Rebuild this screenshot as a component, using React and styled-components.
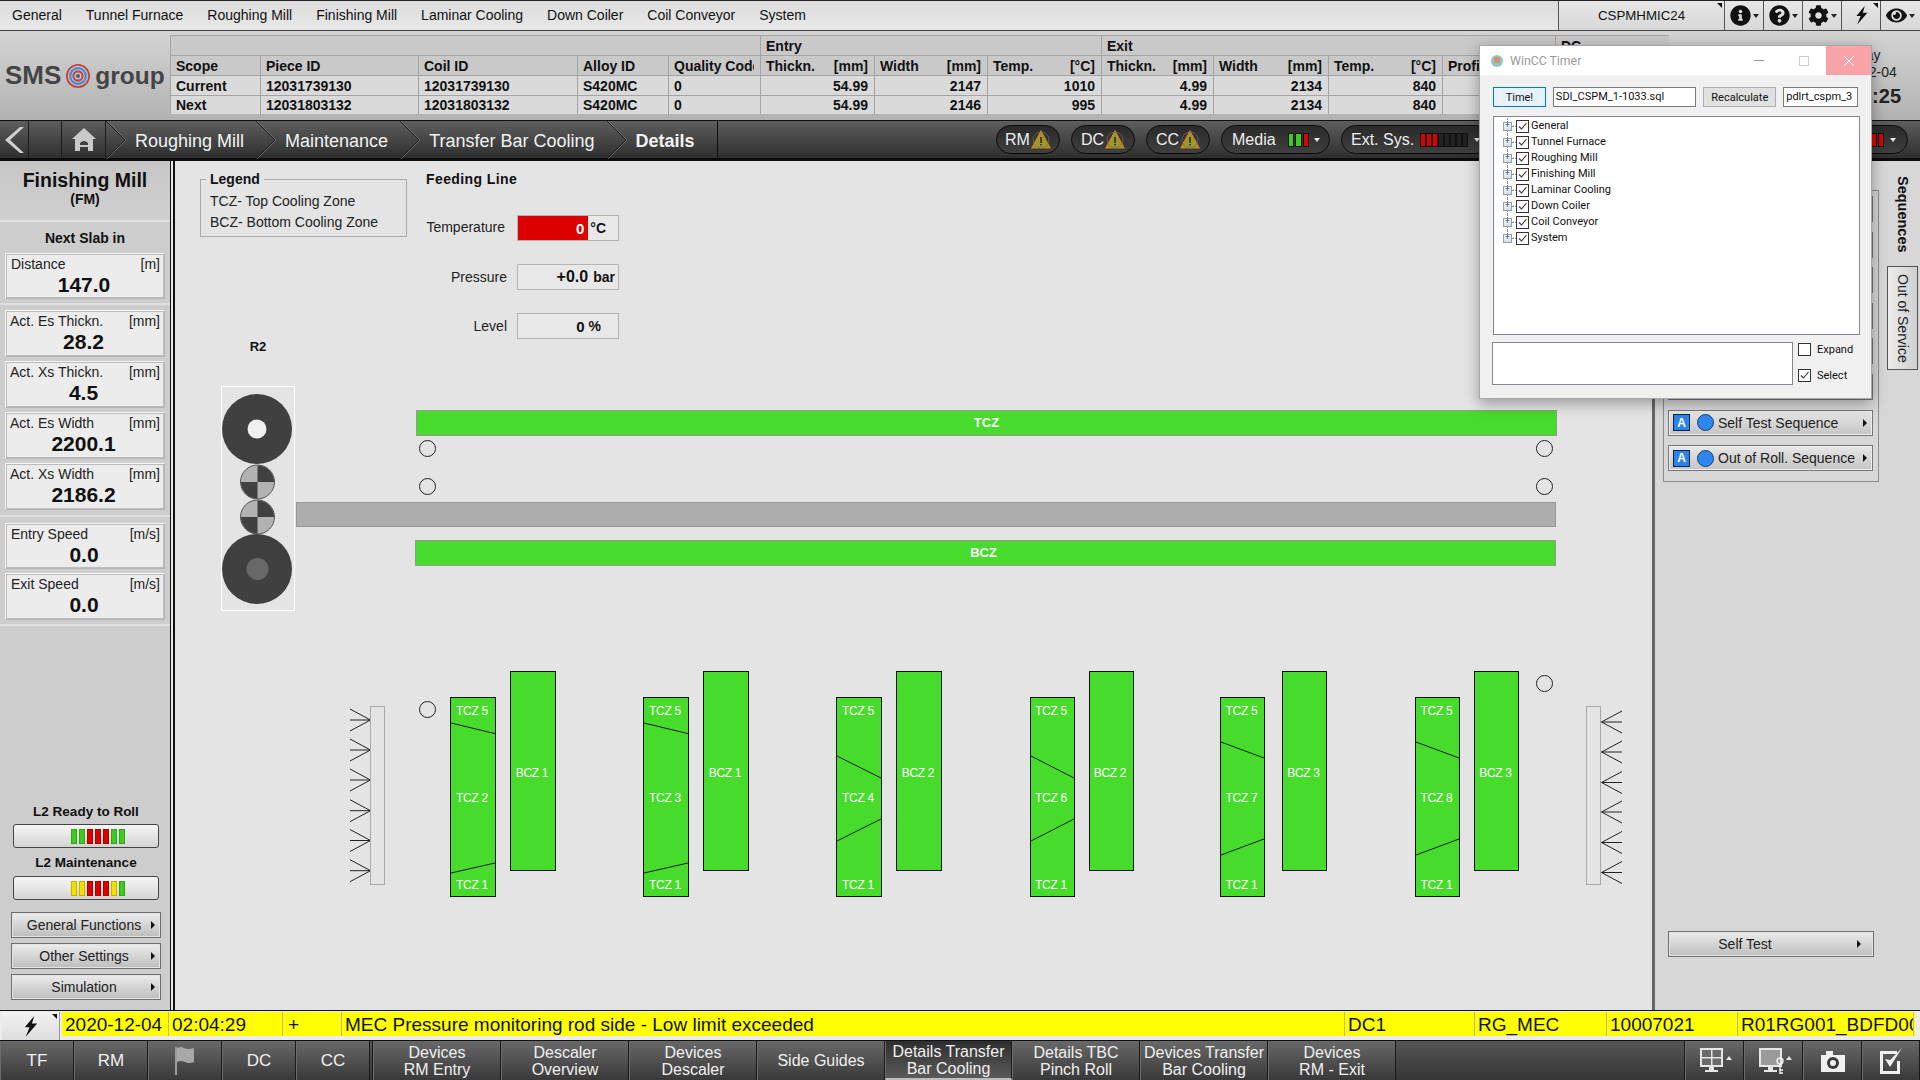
import styled, { createGlobalStyle } from "styled-components";
import { FaInfoCircle, FaQuestionCircle, FaCog, FaEye } from "react-icons/fa";

const GlobalStyle = createGlobalStyle`
  html, body {
    margin: 0;
    padding: 0;
    background: #e4e4e4;
  }
  * {
    box-sizing: border-box;
  }
`;

const Page = styled.div`
  position: relative;
  width: 1920px;
  height: 1080px;
  overflow: hidden;
  display: flex;
  flex-direction: column;
  font-family: "Liberation Sans", Arial, sans-serif;
  color: #111;
`;

/* top menu */
const TopMenu = styled.div`
  height: 31px;
  flex: none;
  display: flex;
  align-items: stretch;
  background: linear-gradient(#dcdcdc, #e8e8e8);
  border-top: 1px solid #222;
  border-bottom: 1px solid #444;
  font-size: 14px;
`;

const MenuItems = styled.div`
  flex: 1;
  display: flex;
  align-items: center;
  gap: 24px;
  padding: 0 0 2px 12px;
`;

const ComputerName = styled.div`
  position: relative;
  width: 167px;
  display: flex;
  align-items: center;
  justify-content: center;
  padding-bottom: 1px;
  font-size: 13.3px;
  border-left: 1px solid #555;
  border-right: 1px solid #555;
  background: linear-gradient(#e6e6e6, #d8d8d8);
`;

const Corner = styled.span`
  position: absolute;
  top: 2px;
  right: 2px;
  width: 0;
  height: 0;
  border-top: 5px solid #111;
  border-left: 5px solid transparent;
`;

const ToolButton = styled.div`
  position: relative;
  width: 39px;
  display: flex;
  align-items: center;
  justify-content: center;
  gap: 2px;
  border-right: 1px solid #555;
  background: linear-gradient(#e6e6e6, #d8d8d8);
  font-size: 21px;
  color: #111;
  &:last-child {
    border-right: none;
  }
`;

const Caret = styled.span`
  width: 0;
  height: 0;
  border-top: 4px solid #222;
  border-left: 3px solid transparent;
  border-right: 3px solid transparent;
`;

/* header with the table */
const Header = styled.div`
  height: 89px;
  flex: none;
  display: flex;
  background: linear-gradient(#d4d4d4, #b2b2b2);
`;

const Logo = styled.div`
  width: 170px;
  flex: none;
  display: flex;
  align-items: center;
  padding: 0 0 0 5px;
  gap: 5px;
  font-weight: 700;
  color: #454545;
`;

const LogoText = styled.span`
  font-size: ${(p) => p.$size}px;
`;

const DataTable = styled.div`
  margin-top: 4px;
  width: 1499px;
  height: 79px;
  flex: none;
  display: grid;
  grid-template-columns: 90px 158px 159px 91px 92px 114px 113px 114px 112px 115px 114px 113px 114px;
  grid-template-rows: 20px 20px 20px 19px;
  font-size: 14px;
  font-weight: 700;
`;

const Cell = styled.div`
  grid-column: span ${(p) => p.$span || 1};
  display: flex;
  align-items: center;
  justify-content: ${(p) => (p.$right ? "flex-end" : "space-between")};
  padding: 0 6px 0 5px;
  overflow: hidden;
  white-space: nowrap;
  background: ${(p) => (p.$head ? "#c9c9c9" : "#dadada")};
  border-top: 1px solid #a4a4a4;
  border-left: 1px solid #a4a4a4;
`;

const ClippedHead = styled.span`
  min-width: 0;
  overflow: hidden;
`;

const Unit = styled.span`
  margin-left: auto;
`;

const DateBlock = styled.div`
  margin-left: auto;
  width: 104px;
  padding: 16px 14px 0 0;
  display: flex;
  flex-direction: column;
  align-items: center;
  font-size: 14px;
  line-height: 17px;
  color: #222;
`;

const Clock = styled.div`
  font-size: 20px;
  line-height: 30px;
  font-weight: 700;
`;

/* breadcrumb bar */
const NavBar = styled.div`
  height: 41px;
  flex: none;
  display: flex;
  align-items: stretch;
  background: linear-gradient(#5e5e5e, #2e2e2e);
  border-top: 1px solid #111;
  border-bottom: 3px solid #0c0c0c;
  color: #f2f2f2;
  font-size: 18px;
`;

const NavCell = styled.div`
  width: ${(p) => p.$w}px;
  flex: none;
  display: flex;
  align-items: center;
  justify-content: center;
  border-right: 1px solid #1c1c1c;
`;

const Crumb = styled.div`
  display: flex;
  align-items: center;
  padding-top: 3px;
  font-weight: ${(p) => (p.$active ? 700 : 400)};
`;

const CrumbChevron = styled.svg`
  width: 20px;
  height: 38px;
  margin: ${(p) => p.$margin || "0 9px 0 12px"};
  flex: none;
`;

const CrumbEnd = styled.div`
  margin-left: 22px;
  width: 1px;
  background: #111;
`;

const Pills = styled.div`
  margin-left: auto;
  display: flex;
  align-items: center;
  gap: 11px;
  padding-right: 12px;
`;

const Pill = styled.div`
  width: ${(p) => p.$w}px;
  height: 29px;
  flex: none;
  display: flex;
  align-items: center;
  justify-content: ${(p) => p.$justify || "center"};
  gap: ${(p) => p.$gap || 0}px;
  padding: ${(p) => p.$padding || "0"};
  border: 1px solid #0b0b0b;
  border-radius: 15px;
  background: linear-gradient(#2a2a2a, #3f3f3f);
  font-size: 16px;
  color: #eeeeee;
`;

const SmallBars = styled.div`
  display: flex;
  gap: ${(p) => p.$gap}px;
  margin-left: ${(p) => p.$left || 0}px;
`;

const SmallBar = styled.span`
  width: ${(p) => p.$w}px;
  height: 14px;
  background: ${(p) => p.$color};
  border: 1px solid #111;
`;

const PillCaret = styled.span`
  width: 0;
  height: 0;
  border-top: 4px solid #e8e8e8;
  border-left: 3.5px solid transparent;
  border-right: 3.5px solid transparent;
`;

/* main area */
const Main = styled.div`
  flex: 1;
  min-height: 0;
  display: flex;
`;

const Sidebar = styled.div`
  width: 170px;
  flex: none;
  display: flex;
  flex-direction: column;
  background: #cdcdcd;
`;

const SideTitle = styled.div`
  height: 61px;
  flex: none;
  padding-top: 8px;
  text-align: center;
  font-weight: 700;
  font-size: 19.5px;
  line-height: 23px;
  border-bottom: 2px solid #e2e2e2;
  background: linear-gradient(#c6c6c6, #d0d0d0);
`;

const SideSub = styled.div`
  font-size: 14px;
  line-height: 15px;
`;

const SideSection = styled.div`
  display: flex;
  flex-direction: column;
  gap: ${(p) => p.$gap || 4}px;
  padding: ${(p) => p.$padding};
  border-bottom: 2px solid #dfdfdf;
`;

const SideHeading = styled.div`
  height: 31px;
  margin-bottom: -4px;
  display: flex;
  align-items: center;
  justify-content: center;
  font-size: 14px;
  font-weight: 700;
`;

const ValueBox = styled.div`
  height: ${(p) => p.$h || 47}px;
  flex: none;
  padding: 2px 4px 0 ${(p) => p.$inset || 5}px;
  background: #ececec;
  border: 1px solid #b4b4b4;
  border-top-color: #f6f6f6;
  border-left-color: #f6f6f6;
  box-shadow: 0 0 0 1px #bcbcbc inset;
`;

const ValueHead = styled.div`
  display: flex;
  justify-content: space-between;
  font-size: 14px;
  line-height: 16px;
  color: #222;
`;

const ValueNum = styled.div`
  margin-top: 1px;
  text-align: center;
  padding-right: 3px;
  font-size: 21px;
  line-height: 23px;
  font-weight: 700;
`;

const SideBottom = styled.div`
  margin-top: auto;
  padding: 0 9px 10px 11px;
  display: flex;
  flex-direction: column;
`;

const BarLabel = styled.div`
  height: ${(p) => p.$h}px;
  display: flex;
  align-items: center;
  justify-content: center;
  font-size: 13.5px;
  font-weight: 700;
`;

const StatusBar = styled.div`
  height: 24px;
  margin: 0 2px;
  display: flex;
  align-items: center;
  justify-content: flex-end;
  gap: 2px;
  padding-right: 33px;
  border: 1px solid #444;
  border-radius: 3px;
  background: linear-gradient(#f6f6f6, #d4d4d4);
`;

const StatusTick = styled.span`
  width: 6px;
  height: 15px;
  background: ${(p) => p.$color};
  border: 1px solid rgba(0, 0, 0, 0.2);
`;

const MenuButton = styled.div`
  position: relative;
  height: ${(p) => p.$h || 26}px;
  margin-top: ${(p) => p.$top || 0}px;
  display: flex;
  align-items: center;
  justify-content: center;
  padding-right: ${(p) => p.$pad || 0}px;
  font-size: 14px;
  border: 1px solid #6f6f6f;
  box-shadow: 0 0 0 1px #e4e4e4 inset;
  background: linear-gradient(#ececec, #bdbdbd);
  color: #222;
`;

const MenuArrow = styled.span`
  position: absolute;
  right: ${(p) => p.$right || 5}px;
  top: 50%;
  margin-top: -4px;
  width: 0;
  height: 0;
  border-left: 4px solid #111;
  border-top: 4px solid transparent;
  border-bottom: 4px solid transparent;
`;

const DoubleLine = styled.div`
  width: 5px;
  flex: none;
  background: #e8e8e8;
  border-left: 1px solid #111;
  border-right: 2px solid #111;
`;

/* canvas */
const Canvas = styled.div`
  position: relative;
  flex: 1;
  background: #e4e4e4;
  display: flex;
  align-items: flex-start;
  padding: 18px 0 0 25px;
`;

const LegendBox = styled.div`
  position: relative;
  width: 207px;
  height: 58px;
  flex: none;
  padding: 11px 0 0 9px;
  border: 1px solid #aaaaaa;
  font-size: 14px;
  line-height: 21px;
  color: #222;
`;

const LegendTitle = styled.span`
  position: absolute;
  top: -9px;
  left: 5px;
  padding: 0 4px;
  background: #e4e4e4;
  font-weight: 700;
  line-height: 17px;
  color: #111;
`;

const Feeding = styled.div`
  margin: -8px 0 0 19px;
  width: 195px;
`;

const FeedingTitle = styled.div`
  height: 16px;
  font-size: 14px;
  line-height: 16px;
  font-weight: 700;
  letter-spacing: 0.4px;
`;

const FeedingGrid = styled.div`
  margin-top: 28px;
  display: grid;
  grid-template-columns: 82px 102px;
  grid-auto-rows: 26px;
  column-gap: 10px;
  row-gap: 23px;
  margin-left: -1px;
  font-size: 14px;
  align-items: center;
`;

const FeedingLabel = styled.div`
  text-align: right;
  padding-right: ${(p) => p.$right || 0}px;
  padding-bottom: ${(p) => p.$bottom || 0}px;
  color: #222;
`;

const FeedingValue = styled.div`
  height: 26px;
  display: flex;
  align-items: center;
  justify-content: flex-end;
  padding-right: ${(p) => p.$pad || 4}px;
  gap: ${(p) => p.$gap || 4}px;
  background: #e8e8e8;
  border: 1px solid #b4b4b4;
  font-weight: 700;
`;

const RedValue = styled.div`
  width: 72px;
  height: 24px;
  margin: 0 auto 0 0;
  display: flex;
  align-items: center;
  justify-content: flex-end;
  padding-right: 4px;
  background: #dc0000;
  color: #ffffff;
  font-size: 15px;
`;

const Plain = styled.span`
  font-weight: ${(p) => p.$weight || 700};
  font-size: ${(p) => p.$size || 14}px;
`;

const RollLabel = styled.div`
  position: absolute;
  left: 58px;
  top: 178px;
  width: 50px;
  text-align: center;
  font-size: 13px;
  font-weight: 700;
`;

const RollStand = styled.svg`
  position: absolute;
  left: 46px;
  top: 225px;
  width: 74px;
  height: 225px;
`;

const Band = styled.div`
  position: absolute;
  left: ${(p) => p.$x}px;
  top: ${(p) => p.$y}px;
  width: ${(p) => p.$w}px;
  height: ${(p) => p.$h || 26}px;
  display: flex;
  align-items: center;
  justify-content: center;
  padding: 0 ${(p) => p.$labelShift || 0}px 2px 0;
  background: ${(p) => p.$bg || "#47db2b"};
  border: 1px solid #979797;
  color: #ffffff;
  font-size: 13px;
  font-weight: 700;
`;

const Sensor = styled.span`
  position: absolute;
  left: ${(p) => p.$x - 8}px;
  top: ${(p) => p.$y - 8.5}px;
  width: 17px;
  height: 17px;
  border: 1.5px solid #222;
  border-radius: 50%;
`;

const Rack = styled.div`
  position: absolute;
  left: ${(p) => p.$x}px;
  top: 545px;
  width: ${(p) => p.$w}px;
  height: 179px;
  border: 1px solid #a9a9a9;
`;

const ArrowSet = styled.svg`
  position: absolute;
  left: ${(p) => p.$x}px;
  top: 545px;
  width: 24px;
  height: 179px;
`;

const CoolingUnit = styled.div`
  position: absolute;
  left: ${(p) => p.$x}px;
  top: 510px;
  display: flex;
  align-items: flex-start;
  gap: ${(p) => p.$gap}px;
`;

const Zone = styled.div`
  position: relative;
  width: ${(p) => p.$w}px;
  height: 200px;
  margin-top: ${(p) => p.$top || 0}px;
  background: #47db2b;
  border: 1px solid #111;
`;

const ZoneLines = styled.svg`
  position: absolute;
  left: 0;
  top: 0;
  width: 100%;
  height: 100%;
`;

const ZoneLabel = styled.span`
  position: absolute;
  left: 0;
  right: 2px;
  top: ${(p) => p.$y - 8}px;
  line-height: 16px;
  text-align: center;
  color: #ffffff;
  font-size: 12px;
  letter-spacing: -0.3px;
`;

/* right column */
const RightPanel = styled.div`
  width: 268px;
  flex: none;
  display: flex;
  background: #d7d7d7;
  border-left: 3px solid #666;
`;

const RightColumn = styled.div`
  width: 225px;
  flex: none;
  padding: 29px 0 0 8px;
`;

const SeqGroup = styled.div`
  width: 216px;
  height: 292px;
  display: flex;
  flex-direction: column;
  gap: 9.6px;
  padding: 5px 5px 0 4px;
  border: 1px solid #8c8c8c;
`;

const SeqButton = styled.div`
  position: relative;
  height: 26px;
  flex: none;
  display: flex;
  align-items: center;
  padding-left: 4px;
  font-size: 14px;
  border: 1px solid #777;
  box-shadow: 0 0 0 1px #eeeeee inset;
  background: linear-gradient(#e8e8e8, #c4c4c4);
  color: #222;
`;

const AutoBadge = styled.span`
  width: 17px;
  height: 17px;
  flex: none;
  display: flex;
  align-items: center;
  justify-content: center;
  background: #2d83ee;
  border: 1px solid #0c2340;
  color: #ffffff;
  font-size: 12px;
  font-weight: 700;
`;

const StateDot = styled.span`
  width: 17px;
  height: 17px;
  flex: none;
  margin: 0 4px 0 7px;
  border-radius: 50%;
  background: #2f86f0;
  border: 1px solid #1f3f66;
`;

const SelfTest = styled(MenuButton)`
  width: 206px;
  margin: 449px 0 0 5px;
  padding-right: 52px;
`;

const SideTabs = styled.div`
  flex: 1;
  padding: 4px 0 0 7px;
  display: flex;
  flex-direction: column;
`;

const SeqTab = styled.div`
  writing-mode: vertical-rl;
  height: 101px;
  width: 31px;
  padding-top: 11px;
  display: flex;
  align-items: center;
  justify-content: flex-start;
  font-size: 14.5px;
  font-weight: 700;
`;

const ServiceTab = styled.div`
  writing-mode: vertical-rl;
  height: 104px;
  width: 31px;
  display: flex;
  align-items: center;
  justify-content: center;
  font-size: 14px;
  border: 1px solid #555;
  background: linear-gradient(to right, #ececec, #d0d0d0);
  color: #222;
`;

/* alarm line */
const AlarmBar = styled.div`
  height: 31px;
  flex: none;
  display: flex;
  align-items: flex-start;
  padding: 1px 5px 0 2px;
  border-top: 1px solid #111;
  border-bottom: 1px solid #111;
  background: #ececec;
`;

const AlarmButton = styled.div`
  position: relative;
  width: 58px;
  height: 28px;
  flex: none;
  margin-right: 2px;
  display: flex;
  align-items: center;
  justify-content: center;
  background: linear-gradient(#f2f2f2, #dddddd);
  border-right: 1px solid #999;
`;

const AlarmCells = styled.div`
  flex: 1;
  min-width: 0;
  height: 24px;
  display: flex;
  background: #ffff00;
  font-size: 19px;
  overflow: hidden;
  color: #111;
`;

const AlarmCell = styled.div`
  width: ${(p) => p.$w}px;
  flex: none;
  padding-left: ${(p) => p.$inset || 3}px;
  line-height: 26px;
  white-space: nowrap;
  overflow: hidden;
  border-right: 1px solid #b9b98a;
`;

/* bottom navigation */
const BottomNav = styled.div`
  height: 39px;
  flex: none;
  display: flex;
  background: linear-gradient(#626262, #363636);
  color: #f0f0f0;
`;

const NavTab = styled.div`
  width: ${(p) => p.$w}px;
  flex: none;
  display: flex;
  align-items: center;
  justify-content: center;
  text-align: center;
  font-size: ${(p) => p.$size || 16}px;
  line-height: 17px;
  border-right: 1px solid #1a1a1a;
  border-left: 1px solid #6c6c6c;
  background: ${(p) =>
    p.$active ? "linear-gradient(#2e2e2e, #5a5a5a)" : "linear-gradient(#686868, #393939)"};
  border-bottom: ${(p) => (p.$active ? "2px solid #bdbdbd" : "none")};
`;

const NavGap = styled.div`
  width: ${(p) => p.$w}px;
  flex: ${(p) => (p.$grow ? 1 : "none")};
  background: linear-gradient(#555, #363636);
  border-right: 1px solid #1a1a1a;
`;

/* WinCC Timer dialog */
const Dialog = styled.div`
  position: absolute;
  left: 1479px;
  top: 45px;
  width: 393px;
  height: 354px;
  background: #f0f0f0;
  border: 1px solid #a8a8a8;
  box-shadow: 0 4px 14px rgba(0, 0, 0, 0.35);
  font-family: Roboto, "Open Sans", sans-serif;
  font-size: 11px;
  color: #111;
`;

const TitleBar = styled.div`
  height: 29px;
  display: flex;
  align-items: center;
  background: #ffffff;
  padding-left: 10px;
  color: #9a9a9a;
  font-size: 12.3px;
  white-space: nowrap;
`;

const TitleText = styled.span`
  margin-left: 6px;
  margin-right: auto;
`;

const WindowButton = styled.div`
  width: 45px;
  height: 29px;
  flex: none;
  display: flex;
  align-items: center;
  justify-content: center;
  background: ${(p) => p.$bg || "transparent"};
`;

const DialogBody = styled.div`
  padding: 12px 13px 0 13px;
`;

const DialogRow = styled.div`
  display: flex;
  gap: 7px;
`;

const WinButton = styled.div`
  width: ${(p) => p.$w}px;
  height: 20px;
  display: flex;
  align-items: center;
  justify-content: center;
  border: 1px solid ${(p) => (p.$focus ? "#0078d7" : "#adadad")};
  background: ${(p) => (p.$focus ? "#e5f1fb" : "#e1e1e1")};
`;

const WinInput = styled.div`
  width: ${(p) => p.$w}px;
  height: 20px;
  padding-left: 2px;
  line-height: 17px;
  border: 1px solid #7a7a7a;
  background: #ffffff;
  white-space: nowrap;
`;

const Tree = styled.div`
  margin-top: 9px;
  width: 367px;
  height: 219px;
  padding: 1px 0 0 9px;
  border: 1px solid #828790;
  background: #ffffff;
`;

const TreeRow = styled.div`
  position: relative;
  height: 16px;
  display: flex;
  align-items: center;
  line-height: 16px;
`;

const TreeLine = styled.span`
  position: absolute;
  left: 4px;
  top: 0;
  bottom: ${(p) => (p.$last ? "8px" : 0)};
  border-left: 1px dotted #888;
`;

const Expander = styled.span`
  position: relative;
  z-index: 1;
  width: 9px;
  height: 9px;
  flex: none;
  display: flex;
  align-items: center;
  justify-content: center;
  border: 1px solid #8d9db5;
  background: linear-gradient(#ffffff, #dcdcdc);
  color: #1b2f70;
  font-size: 9px;
  line-height: 7px;
  font-family: "Liberation Mono", monospace;
`;

const TreeDash = styled.span`
  width: 4px;
  flex: none;
  border-top: 1px dotted #888;
`;

const CheckSquare = styled.span`
  width: 13px;
  height: 13px;
  flex: none;
  display: flex;
  align-items: center;
  justify-content: center;
  background: #ffffff;
  border: 1px solid #333;
  margin-right: 2px;
`;

const LowerRow = styled.div`
  margin-top: 7px;
  margin-left: -1px;
  display: flex;
  gap: 5px;
`;

const WinArea = styled.div`
  width: 301px;
  height: 43px;
  background: #ffffff;
  border: 1px solid #828790;
`;

const CheckColumn = styled.div`
  display: flex;
  flex-direction: column;
  gap: 13px;
  padding-top: 1px;
`;

const CheckRow = styled.div`
  height: 13px;
  display: flex;
  align-items: center;
  gap: 4px;
  line-height: 13px;
`;

const CheckMark = () => (
  <svg width="11" height="11" viewBox="0 0 11 11">
    <path d="M2 5.5 L4.5 8 L9.5 2" fill="none" stroke="#333" strokeWidth="1.1" />
  </svg>
);

const Bolt = ({ size = 22 }) => (
  <svg width={size} height={size * 1.2} viewBox="0 0 20 24">
    <path d="M14 1 L4 13 L9 13 L5 23 L17 9 L11.5 9 Z" fill="#111" />
  </svg>
);

const HomeIcon = () => (
  <svg width="26" height="25" viewBox="0 0 26 25">
    <path d="M13 1 L25 12 L22 12 L22 24 L17 24 L17 16 Q13 12 9 16 L9 24 L4 24 L4 12 L1 12 Z" fill="#c9c9c9" />
    <rect x="9" y="18" width="8" height="2" fill="#c9c9c9" />
  </svg>
);

const BackIcon = () => (
  <svg width="20" height="26" viewBox="0 0 20 26">
    <path d="M16 0 L20 0 L6 13 L20 26 L16 26 L1 13 Z" fill="#d0d0d0" />
  </svg>
);

const Chevron = ({ margin }) => (
  <CrumbChevron viewBox="0 0 20 38" $margin={margin}>
    <polyline points="0,0 19,19 0,38" fill="none" stroke="#1c1c1c" strokeWidth="1" />
    <polyline points="1,0 20,19 1,38" fill="none" stroke="#808080" strokeWidth="0.7" />
  </CrumbChevron>
);

const WarnIcon = () => (
  <svg width="20" height="19" viewBox="0 0 20 19">
    <path d="M10 1 L19 18 L1 18 Z" fill="#9a9a2c" stroke="#d9821a" strokeWidth="1.2" />
    <circle cx="10" cy="10" r="8" fill="none" stroke="#6c6c6c" strokeWidth="0.7" />
    <rect x="9.3" y="7" width="1.4" height="6" fill="#222" />
    <rect x="9.3" y="14" width="1.4" height="1.5" fill="#222" />
  </svg>
);

const LogoMark = () => (
  <svg width="24" height="24" viewBox="0 0 26 26">
    <ellipse cx="13" cy="13" rx="12" ry="12" fill="none" stroke="#c94040" strokeWidth="2" />
    <ellipse cx="13" cy="13" rx="8.5" ry="8.5" fill="none" stroke="#3f8fd2" strokeWidth="2.4" />
    <ellipse cx="13" cy="13" rx="5" ry="5" fill="none" stroke="#c94040" strokeWidth="2.2" />
    <circle cx="13" cy="13" r="2.2" fill="#3f5f86" />
  </svg>
);

const RollQuarters = ({ cy }) => (
  <g>
    <circle cx="36.5" cy={cy} r="17" fill="#b2b2b2" stroke="#555" strokeWidth="1" />
    <path d={`M36.5 ${cy} L36.5 ${cy - 16.5} A16.5 16.5 0 0 1 53 ${cy} Z`} fill="#404040" />
    <path d={`M36.5 ${cy} L36.5 ${cy + 16.5} A16.5 16.5 0 0 1 20 ${cy} Z`} fill="#404040" />
  </g>
);

const LEFT_ARROWS = [14, 44, 74, 104.7, 134.5, 164.7];
const RIGHT_ARROWS = [16, 46, 76.5, 106, 136.5, 166.5];

const UNITS = [
  { x: 275, w: 46, gap: 14, top: [25, 35.6], bottom: [175, 165], mid: "TCZ 2", bcz: "BCZ 1" },
  { x: 468, w: 46, gap: 14, top: [25, 35.6], bottom: [175, 165], mid: "TCZ 3", bcz: "BCZ 1" },
  { x: 661, w: 46, gap: 14, top: [58, 80], bottom: [143, 121], mid: "TCZ 4", bcz: "BCZ 2" },
  { x: 854.5, w: 45, gap: 14, top: [58, 80], bottom: [143, 121], mid: "TCZ 6", bcz: "BCZ 2" },
  { x: 1045, w: 45, gap: 17, top: [44, 60], bottom: [157, 141], mid: "TCZ 7", bcz: "BCZ 3" },
  { x: 1240, w: 45, gap: 14, top: [44, 60], bottom: [157, 141], mid: "TCZ 8", bcz: "BCZ 3" },
];

const MENU = ["General", "Tunnel Furnace", "Roughing Mill", "Finishing Mill", "Laminar Cooling", "Down Coiler", "Coil Conveyor", "System"];
const TREE = MENU;
const READY = ["#3fcc22", "#3fcc22", "#dd0000", "#dd0000", "#dd0000", "#3fcc22", "#3fcc22"];
const MAINT = ["#f2e000", "#f2e000", "#dd0000", "#dd0000", "#dd0000", "#f2e000", "#3fcc22"];

function CoolingZones({ unit }) {
  const w = unit.w - 2;
  return (
    <CoolingUnit $x={unit.x} $gap={unit.gap}>
      <Zone $w={unit.w} $top={26}>
        <ZoneLines viewBox={`0 0 ${w} 198`}>
          <line x1="0" y1={unit.top[0]} x2={w} y2={unit.top[1]} stroke="#1c1c1c" strokeWidth="1" />
          <line x1="0" y1={unit.bottom[0]} x2={w} y2={unit.bottom[1]} stroke="#1c1c1c" strokeWidth="1" />
        </ZoneLines>
        <ZoneLabel $y={13}>TCZ 5</ZoneLabel>
        <ZoneLabel $y={100}>{unit.mid}</ZoneLabel>
        <ZoneLabel $y={187}>TCZ 1</ZoneLabel>
      </Zone>
      <Zone $w={unit.w}>
        <ZoneLabel $y={101}>{unit.bcz}</ZoneLabel>
      </Zone>
    </CoolingUnit>
  );
}

function SideValue({ label, unit, value, h, inset }) {
  return (
    <ValueBox $h={h} $inset={inset}>
      <ValueHead>
        <span>{label}</span>
        <span>{unit}</span>
      </ValueHead>
      <ValueNum>{value}</ValueNum>
    </ValueBox>
  );
}

function TableRow({ name, piece, coil, values }) {
  return (
    <>
      <Cell>{name}</Cell>
      <Cell>{piece}</Cell>
      <Cell>{coil}</Cell>
      <Cell>S420MC</Cell>
      <Cell>0</Cell>
      {values.map((v, i) => (
        <Cell key={i} $right>{v}</Cell>
      ))}
      <Cell />
      <Cell />
    </>
  );
}

export default function App() {
  return (
    <Page>
      <GlobalStyle />

      <TopMenu>
        <MenuItems>
          {MENU.map((m) => (
            <span key={m}>{m}</span>
          ))}
        </MenuItems>
        <ComputerName>
          CSPMHMIC24
          <Corner />
        </ComputerName>
        <ToolButton>
          <FaInfoCircle />
          <Caret />
        </ToolButton>
        <ToolButton>
          <FaQuestionCircle />
          <Caret />
        </ToolButton>
        <ToolButton>
          <FaCog />
          <Caret />
        </ToolButton>
        <ToolButton>
          <Bolt size={17} />
          <Corner />
        </ToolButton>
        <ToolButton>
          <FaEye />
          <Caret />
        </ToolButton>
      </TopMenu>

      <Header>
        <Logo>
          <LogoText $size={26}>SMS</LogoText>
          <LogoMark />
          <LogoText $size={24.5}>group</LogoText>
        </Logo>
        <DataTable>
          <Cell $span={5} $head />
          <Cell $span={3} $head>Entry</Cell>
          <Cell $span={4} $head>Exit</Cell>
          <Cell $head>DC</Cell>

          <Cell $head>Scope</Cell>
          <Cell $head>Piece ID</Cell>
          <Cell $head>Coil ID</Cell>
          <Cell $head>Alloy ID</Cell>
          <Cell $head><ClippedHead>Quality Code</ClippedHead></Cell>
          <Cell $head>Thickn.<Unit>[mm]</Unit></Cell>
          <Cell $head>Width<Unit>[mm]</Unit></Cell>
          <Cell $head>Temp.<Unit>[°C]</Unit></Cell>
          <Cell $head>Thickn.<Unit>[mm]</Unit></Cell>
          <Cell $head>Width<Unit>[mm]</Unit></Cell>
          <Cell $head>Temp.<Unit>[°C]</Unit></Cell>
          <Cell $head>Profile</Cell>
          <Cell $head />

          <TableRow name="Current" piece="12031739130" coil="12031739130" values={["54.99", "2147", "1010", "4.99", "2134", "840"]} />
          <TableRow name="Next" piece="12031803132" coil="12031803132" values={["54.99", "2146", "995", "4.99", "2134", "840"]} />
        </DataTable>
        <DateBlock>
          <span>Friday</span>
          <span>2020-12-04</span>
          <Clock>02:04:25</Clock>
        </DateBlock>
      </Header>

      <NavBar>
        <NavCell $w={29}>
          <BackIcon />
        </NavCell>
        <NavCell $w={33} />
        <NavCell $w={44}>
          <HomeIcon />
        </NavCell>
        <Chevron margin="0 9px 0 0" />
        <Crumb>Roughing Mill</Crumb>
        <Chevron />
        <Crumb>Maintenance</Crumb>
        <Chevron />
        <Crumb>Transfer Bar Cooling</Crumb>
        <Chevron />
        <Crumb $active>Details</Crumb>
        <CrumbEnd />
        <Pills>
          <Pill $w={64} $gap={1}>RM<WarnIcon /></Pill>
          <Pill $w={64} $gap={1}>DC<WarnIcon /></Pill>
          <Pill $w={64} $gap={1}>CC<WarnIcon /></Pill>
          <Pill $w={109} $gap={5} $justify="flex-start" $padding="0 0 0 10px">
            Media
            <SmallBars $gap={1} $left={7}>
              <SmallBar $w={6.5} $color="#3fcc22" />
              <SmallBar $w={6.5} $color="#3fcc22" />
              <SmallBar $w={6.5} $color="#dd0000" />
            </SmallBars>
            <PillCaret />
          </Pill>
          <Pill $w={150} $gap={6} $justify="flex-start" $padding="0 0 0 9px">
            Ext. Sys.
            <SmallBars $gap={0.5}>
              {[0, 1, 2, 3, 4, 5, 6, 7].map((i) => (
                <SmallBar key={i} $w={5.5} $color={i < 3 ? "#dd0000" : "#222"} />
              ))}
            </SmallBars>
            <PillCaret />
          </Pill>
          <Pill $w={406} $justify="flex-end" $gap={6} $padding="0 11px 0 0">
            <SmallBars $gap={0.5}>
              <SmallBar $w={6.5} $color="#dd0000" />
              <SmallBar $w={6.5} $color="#dd0000" />
            </SmallBars>
            <PillCaret />
          </Pill>
        </Pills>
      </NavBar>

      <Main>
        <Sidebar>
          <SideTitle>
            Finishing Mill
            <SideSub>(FM)</SideSub>
          </SideTitle>
          <SideSection $padding="0 5px 4px 5px">
            <SideHeading>Next Slab in</SideHeading>
            <SideValue label="Distance" unit="[m]" value="147.0" h={46} />
          </SideSection>
          <SideSection $padding="5px 5px 5px 5px" $gap={4}>
            <SideValue label="Act. Es Thickn." unit="[mm]" value="28.2" inset={4} />
            <SideValue label="Act. Xs Thickn." unit="[mm]" value="4.5" inset={4} />
            <SideValue label="Act. Es Width" unit="[mm]" value="2200.1" inset={4} />
            <SideValue label="Act. Xs Width" unit="[mm]" value="2186.2" inset={4} />
          </SideSection>
          <SideSection $padding="6px 5px 4px 5px" $gap={4}>
            <SideValue label="Entry Speed" unit="[m/s]" value="0.0" h={46} />
            <SideValue label="Exit Speed" unit="[m/s]" value="0.0" h={47} />
          </SideSection>
          <SideBottom>
            <BarLabel $h={26}>L2 Ready to Roll</BarLabel>
            <StatusBar>
              {READY.map((c, i) => (
                <StatusTick key={i} $color={c} />
              ))}
            </StatusBar>
            <BarLabel $h={28}>L2 Maintenance</BarLabel>
            <StatusBar>
              {MAINT.map((c, i) => (
                <StatusTick key={i} $color={c} />
              ))}
            </StatusBar>
            <MenuButton $top={12} $pad={4}>General Functions<MenuArrow /></MenuButton>
            <MenuButton $top={5} $pad={4}>Other Settings<MenuArrow /></MenuButton>
            <MenuButton $top={5} $pad={4}>Simulation<MenuArrow /></MenuButton>
          </SideBottom>
        </Sidebar>
        <DoubleLine />

        <Canvas>
          <LegendBox>
            <LegendTitle>Legend</LegendTitle>
            <div>TCZ- Top Cooling Zone</div>
            <div>BCZ- Bottom Cooling Zone</div>
          </LegendBox>
          <Feeding>
            <FeedingTitle>Feeding Line</FeedingTitle>
            <FeedingGrid>
              <FeedingLabel $right={2} $bottom={2}>Temperature</FeedingLabel>
              <FeedingValue $pad={12} $gap={2}>
                <RedValue>0</RedValue>
                <Plain>°C</Plain>
              </FeedingValue>
              <FeedingLabel>Pressure</FeedingLabel>
              <FeedingValue $pad={3} $gap={5}>
                <Plain $size={16}>+0.0</Plain>
                <Plain>bar</Plain>
              </FeedingValue>
              <FeedingLabel>Level</FeedingLabel>
              <FeedingValue $pad={17}>
                <Plain $size={15}>0</Plain>
                <Plain>%</Plain>
              </FeedingValue>
            </FeedingGrid>
          </Feeding>

          <RollLabel>R2</RollLabel>
          <RollStand viewBox="0 0 74 225">
            <rect x="0.5" y="0.5" width="73" height="224" fill="none" stroke="#ffffff" strokeWidth="1" />
            <circle cx="36" cy="43" r="35" fill="#404040" />
            <circle cx="36" cy="43" r="9.5" fill="#f0f0f0" />
            <RollQuarters cy={96} />
            <RollQuarters cy={131} />
            <circle cx="36" cy="183" r="35" fill="#404040" />
            <circle cx="36.5" cy="183" r="11" fill="#686868" />
          </RollStand>

          <Band $x={241} $y={249} $w={1141}>TCZ</Band>
          <Band $x={121} $y={341} $w={1260} $h={25} $bg="#adadad" />
          <Band $x={240} $y={379} $w={1141} $labelShift={4}>BCZ</Band>

          <Sensor $x={252} $y={287} />
          <Sensor $x={252} $y={325} />
          <Sensor $x={1369} $y={287} />
          <Sensor $x={1369} $y={325} />
          <Sensor $x={252} $y={548} />
          <Sensor $x={1369} $y={522} />

          <ArrowSet $x={175} viewBox="0 0 24 179">
            {LEFT_ARROWS.map((y) => (
              <path key={y} d={`M0 ${y - 11} L20.5 ${y} L0 ${y + 11} M0 ${y} L20.5 ${y}`} fill="none" stroke="#222" strokeWidth="1" />
            ))}
          </ArrowSet>
          <Rack $x={195} $w={15} />
          <Rack $x={1411} $w={15} />
          <ArrowSet $x={1425} viewBox="0 0 24 179">
            {RIGHT_ARROWS.map((y) => (
              <path key={y} d={`M22 ${y - 11} L1.5 ${y} L22 ${y + 11} M22 ${y} L1.5 ${y}`} fill="none" stroke="#222" strokeWidth="1" />
            ))}
          </ArrowSet>

          {UNITS.map((u) => (
            <CoolingZones key={u.x} unit={u} />
          ))}
        </Canvas>

        <RightPanel>
          <RightColumn>
            <SeqGroup>
              <SeqButton />
              <SeqButton />
              <SeqButton />
              <SeqButton />
              <SeqButton />
              <SeqButton />
              <SeqButton>
                <AutoBadge>A</AutoBadge>
                <StateDot />
                Self Test Sequence
                <MenuArrow />
              </SeqButton>
              <SeqButton>
                <AutoBadge>A</AutoBadge>
                <StateDot />
                Out of Roll. Sequence
                <MenuArrow />
              </SeqButton>
            </SeqGroup>
            <SelfTest>
              Self Test
              <MenuArrow $right={12} />
            </SelfTest>
          </RightColumn>
          <SideTabs>
            <SeqTab>Sequences</SeqTab>
            <ServiceTab>Out of Service</ServiceTab>
          </SideTabs>
        </RightPanel>
      </Main>

      <AlarmBar>
        <AlarmButton>
          <Bolt size={19} />
          <Corner />
        </AlarmButton>
        <AlarmCells>
          <AlarmCell $w={107}>2020-12-04</AlarmCell>
          <AlarmCell $w={114}>02:04:29</AlarmCell>
          <AlarmCell $w={59} $inset={5}>+</AlarmCell>
          <AlarmCell $w={1003}>MEC Pressure monitoring rod side - Low limit exceeded</AlarmCell>
          <AlarmCell $w={130}>DC1</AlarmCell>
          <AlarmCell $w={132}>RG_MEC</AlarmCell>
          <AlarmCell $w={131}>10007021</AlarmCell>
          <AlarmCell $w={176}>R01RG001_BDFD001</AlarmCell>
        </AlarmCells>
      </AlarmBar>

      <BottomNav>
        <NavTab $w={74} $size={17}>TF</NavTab>
        <NavTab $w={74} $size={17}>RM</NavTab>
        <NavTab $w={74}>
          <svg width="22" height="30" viewBox="0 0 22 30">
            <rect x="1" y="1" width="2" height="28" fill="#9c9c9c" />
            <path d="M3 2 Q7 0 10 2 T20 2 L20 16 Q15 18 11 16 T3 16 Z" fill="#a8a8a8" />
          </svg>
        </NavTab>
        <NavTab $w={74} $size={17}>DC</NavTab>
        <NavTab $w={74} $size={17}>CC</NavTab>
        <NavGap $w={3} />
        <NavTab $w={128}>Devices<br />RM Entry</NavTab>
        <NavTab $w={128}>Descaler<br />Overview</NavTab>
        <NavTab $w={128}>Devices<br />Descaler</NavTab>
        <NavTab $w={128}>Side Guides</NavTab>
        <NavTab $w={127} $active>Details Transfer<br />Bar Cooling</NavTab>
        <NavTab $w={128}>Details TBC<br />Pinch Roll</NavTab>
        <NavTab $w={128}>Devices Transfer<br />Bar Cooling</NavTab>
        <NavTab $w={128}>Devices<br />RM - Exit</NavTab>
        <NavGap $grow />
        <NavTab $w={59}>
          <svg width="36" height="30" viewBox="0 0 36 30">
            <rect x="3" y="2" width="23" height="19" fill="#e6e6e6" />
            <path d="M5 4 H14 V11 H5 Z M15.5 4 H24 V11 H15.5 Z M5 12.5 H14 V19 H5 Z M15.5 12.5 H24 V19 H15.5 Z" fill="#6a6a6a" />
            <rect x="12" y="21" width="5" height="3" fill="#e6e6e6" />
            <rect x="8" y="24" width="13" height="2" fill="#e6e6e6" />
            <path d="M29 14 L32 10 L35 14 Z" fill="#e6e6e6" />
          </svg>
        </NavTab>
        <NavTab $w={59}>
          <svg width="36" height="30" viewBox="0 0 36 30">
            <rect x="3" y="2" width="23" height="19" fill="#e6e6e6" />
            <rect x="5" y="4" width="19" height="15" fill="#9a9a9a" />
            <rect x="12" y="21" width="5" height="3" fill="#e6e6e6" />
            <rect x="8" y="24" width="13" height="2" fill="#e6e6e6" />
            <circle cx="24" cy="15" r="3" fill="none" stroke="#f2f2f2" strokeWidth="1.4" />
            <path d="M24 18 V28 M24 24 H27 M24 27 H27" stroke="#f2f2f2" strokeWidth="1.4" />
            <path d="M30 14 L33 10 L36 14 Z" fill="#e6e6e6" />
          </svg>
        </NavTab>
        <NavTab $w={59}>
          <svg width="26" height="24" viewBox="0 0 26 24">
            <path d="M1 6 H6 V2 H13 V6 H25 V23 H1 Z" fill="#f0f0f0" />
            <circle cx="13" cy="14" r="6" fill="#3a3a3a" />
            <circle cx="13" cy="14" r="3" fill="#f0f0f0" />
          </svg>
        </NavTab>
        <NavTab $w={58}>
          <svg width="26" height="30" viewBox="0 0 26 30">
            <path d="M2 5 H19 V8 H5 V25 H19 V15 H22 V28 H2 Z" fill="#f0f0f0" />
            <path d="M7 13 L12 21 L24 2 L12 14 Z" fill="#f0f0f0" />
          </svg>
        </NavTab>
      </BottomNav>

      <Dialog>
        <TitleBar>
          <svg width="14" height="14" viewBox="0 0 14 14">
            <circle cx="7" cy="7" r="6" fill="#8fc6c2" />
            <circle cx="7" cy="6" r="3" fill="#d88e6a" />
          </svg>
          <TitleText>WinCC Timer</TitleText>
          <WindowButton>
            <svg width="10" height="2" viewBox="0 0 10 2"><rect width="10" height="1" fill="#999" /></svg>
          </WindowButton>
          <WindowButton>
            <svg width="10" height="10" viewBox="0 0 10 10"><rect x="0.5" y="0.5" width="9" height="9" fill="none" stroke="#ccc" /></svg>
          </WindowButton>
          <WindowButton $bg="#f7a3a8">
            <svg width="10" height="10" viewBox="0 0 10 10"><path d="M0 0 L10 10 M10 0 L0 10" stroke="#fff" /></svg>
          </WindowButton>
        </TitleBar>
        <DialogBody>
          <DialogRow>
            <WinButton $w={53} $focus>Time!</WinButton>
            <WinInput $w={144}>SDI_CSPM_1-1033.sql</WinInput>
            <WinButton $w={73}>Recalculate</WinButton>
            <WinInput $w={75}>pdlrt_cspm_3</WinInput>
          </DialogRow>
          <Tree>
            {TREE.map((t, i) => (
              <TreeRow key={t}>
                <TreeLine $last={i === TREE.length - 1} />
                <Expander>+</Expander>
                <TreeDash />
                <CheckSquare>
                  <CheckMark />
                </CheckSquare>
                {t}
              </TreeRow>
            ))}
          </Tree>
          <LowerRow>
            <WinArea />
            <CheckColumn>
              <CheckRow>
                <CheckSquare />
                Expand
              </CheckRow>
              <CheckRow>
                <CheckSquare>
                  <CheckMark />
                </CheckSquare>
                Select
              </CheckRow>
            </CheckColumn>
          </LowerRow>
        </DialogBody>
      </Dialog>
    </Page>
  );
}
